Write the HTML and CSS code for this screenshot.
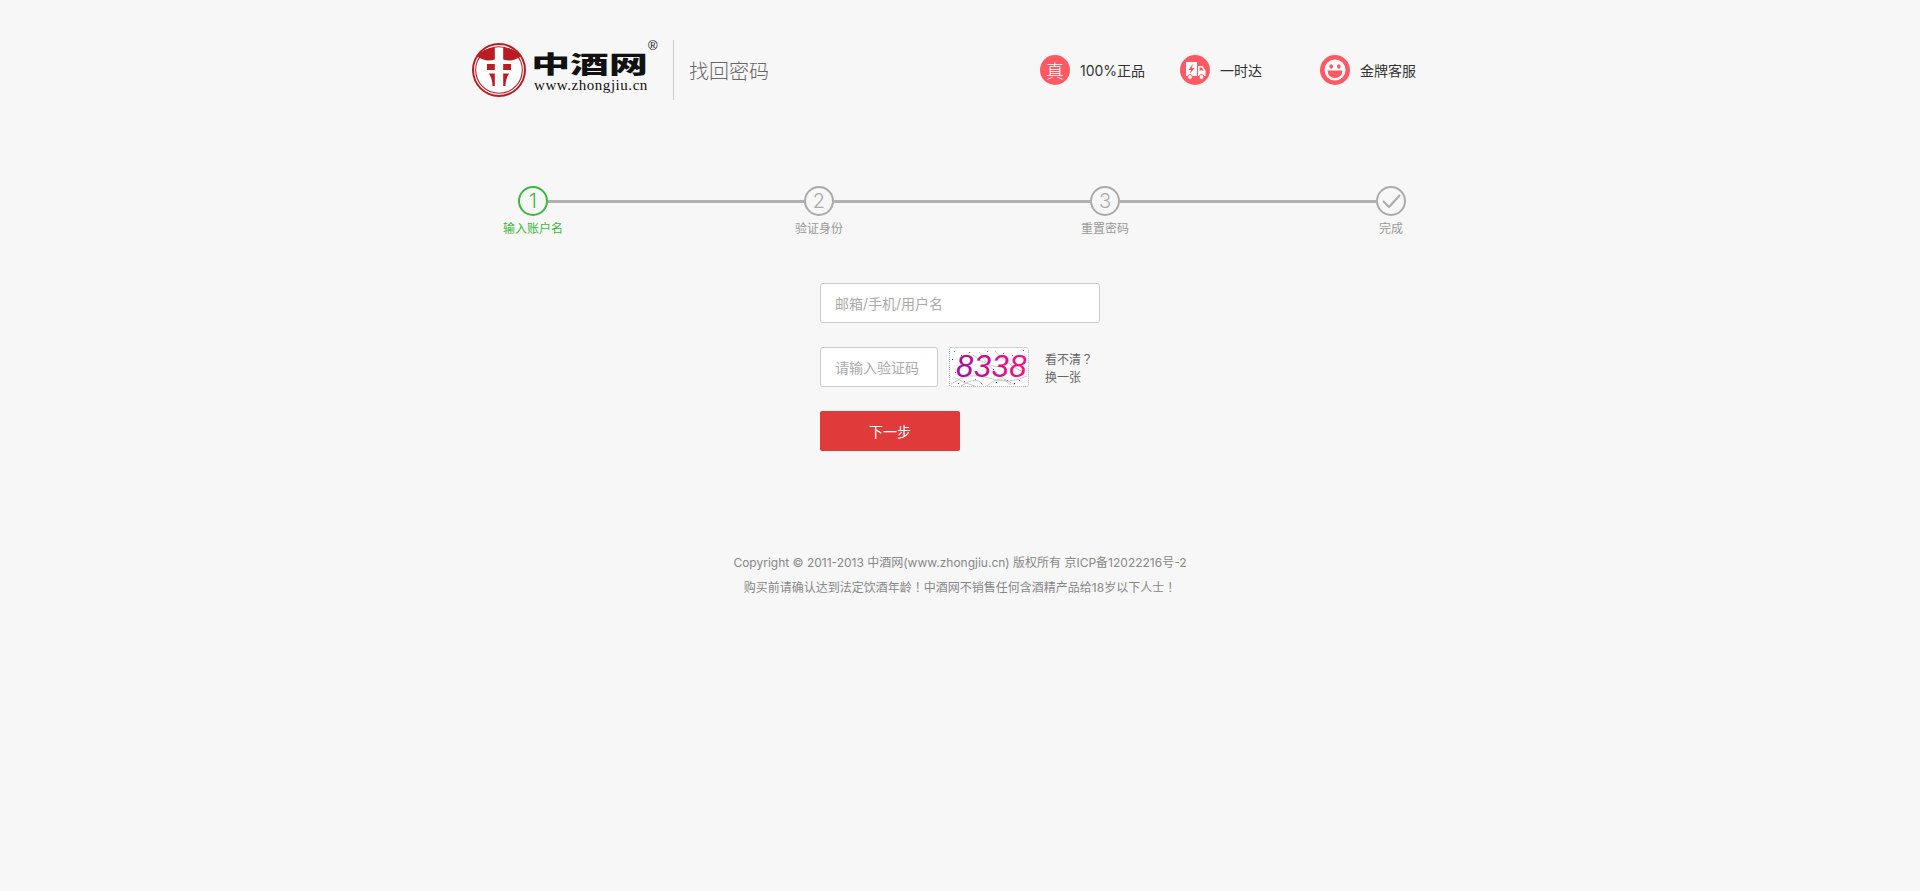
FILE: index.html
```html
<!DOCTYPE html>
<html lang="zh-CN">
<head>
  <meta charset="UTF-8">
  <title>找回密码</title>
  <link rel="stylesheet" href="styles.css">
</head>
<body>
<div class="wrap">
  <div class="header">
    <div class="logo">
      <svg class="logo-mark" width="54" height="56" viewBox="0 0 54 56">
        <circle cx="27" cy="28" r="27" fill="#b91c22"/>
        <circle cx="27" cy="28" r="24.4" fill="none" stroke="#fff" stroke-width="1.1"/>
        <circle cx="27" cy="28" r="22.8" fill="#fff"/>
        <path d="M5 14.5 Q12 18.5 16 18.5 Q20 18.5 22.8 17.5 L22.8 5.4 Q11 6 5 14.5 Z" fill="#b91c22"/>
        <path d="M49 14.5 Q42 18.5 38 18.5 Q34 18.5 31.2 17.5 L31.2 5.4 Q43 6 49 14.5 Z" fill="#b91c22"/>
        <path d="M15 22 L22.8 22 L22.8 28 L15 28 Z M31.2 22 L39 22 L39 28 L31.2 28 Z" fill="#b91c22"/>
        <path d="M17 31.5 L22.8 31.5 L22.8 44 L20.5 44 Q20.5 37 17 31.5 Z" fill="#b91c22"/>
        <path d="M37 31.5 L31.2 31.5 L31.2 44 L33.5 44 Q33.5 37 37 31.5 Z" fill="#b91c22"/>
      </svg>
      <div class="logo-text">
        <div class="logo-cn"><span class="logo-cn-text">中酒网</span><span class="logo-reg">®</span></div>
        <div class="logo-en">www.zhongjiu.cn</div>
      </div>
    </div>
    <div class="page-title">找回密码</div>
    <div class="features">
      <div class="feature">
        <span class="feature-icon feature-icon-text">真</span>
        <span>100%正品</span>
      </div>
      <div class="feature">
        <span class="feature-icon">
          <svg width="30" height="30" viewBox="0 0 30 30">
            <path d="M6 7 L17 7 L17 21 L6 21 Z" fill="#fff"/>
            <path d="M13 8.5 L8.5 15 L11 15 L9.5 19.5 L14.5 13 L11.8 13 Z" fill="#ff5a63"/>
            <path d="M18 11 L22.5 11 L25.5 15.5 L25.5 21 L18 21 Z" fill="#fff"/>
            <path d="M19.5 12.5 L22 12.5 L23.6 15.5 L19.5 15.5 Z" fill="#ff5a63"/>
            <circle cx="10" cy="22" r="2.4" fill="#fff" stroke="#ff5a63"/>
            <circle cx="21.5" cy="22" r="2.4" fill="#fff" stroke="#ff5a63"/>
          </svg>
        </span>
        <span>一时达</span>
      </div>
      <div class="feature">
        <span class="feature-icon">
          <svg width="30" height="30" viewBox="0 0 30 30">
            <circle cx="15" cy="15" r="10.5" fill="#fff"/>
            <ellipse cx="11.2" cy="11.5" rx="1.8" ry="2.2" fill="#ff5a63"/>
            <ellipse cx="18.8" cy="11.5" rx="1.8" ry="2.2" fill="#ff5a63"/>
            <path d="M7.5 15.5 L22.5 15.5 Q22 23 15 23 Q8 23 7.5 15.5 Z" fill="#ff5a63"/>
          </svg>
        </span>
        <span>金牌客服</span>
      </div>
    </div>
  </div>

  <div class="steps">
    <div class="step-track">
      <span class="step-dot step-dot-on">1</span>
      <span class="step-line"></span>
      <span class="step-dot">2</span>
      <span class="step-line"></span>
      <span class="step-dot">3</span>
      <span class="step-line"></span>
      <span class="step-dot">
        <svg width="20" height="16" viewBox="0 0 20 16">
          <path d="M2 8 L8 14 L19 2" fill="none" stroke="#aaa" stroke-width="2"/>
        </svg>
      </span>
    </div>
    <div class="step-labels">
      <span class="step-on">输入账户名</span>
      <span>验证身份</span>
      <span>重置密码</span>
      <span>完成</span>
    </div>
  </div>

  <form class="form">
    <input class="field" type="text" placeholder="邮箱/手机/用户名">
    <div class="code-row">
      <input class="field field-code" type="text" placeholder="请输入验证码">
      <svg class="captcha" width="80" height="40" viewBox="0 0 80 40">
        <defs>
          <linearGradient id="codeInk" x1="0" y1="0" x2="1" y2="0">
            <stop offset="0" stop-color="#a0109c"/>
            <stop offset="1" stop-color="#ff0f7e"/>
          </linearGradient>
        </defs>
        <rect x="0.5" y="0.5" width="79" height="39" rx="2" fill="#fff" stroke="#aaa" stroke-dasharray="1 1"/>
        <path d="M2 37 Q20 24 40 31 T78 29 M12 39 Q28 28 34 38 M38 39 Q50 26 62 38 M46 4 Q56 16 76 26 M24 8 Q38 20 52 20 M30 5 Q44 28 66 38 M5 30 Q14 36 26 39" fill="none" stroke="#b4b4b4" stroke-width="0.7"/>
        <text class="captcha-text" x="7" y="30" fill="url(#codeInk)">8338</text>
        <g fill="#3a7">
          <rect x="5" y="4" width="1" height="1"/><rect x="54" y="6" width="1" height="1"/><rect x="26" y="32" width="1" height="1"/>
          <rect x="15" y="34" width="1" height="1" fill="#e33"/><rect x="3" y="12" width="1" height="1" fill="#22c"/>
          <rect x="74" y="3" width="1" height="1" fill="#e33"/><rect x="76" y="14" width="1" height="1" fill="#0aa"/>
          <rect x="65" y="36" width="1" height="1" fill="#22c"/><rect x="47" y="35" width="1" height="1" fill="#22c"/>
          <rect x="38" y="4" width="1" height="1"/><rect x="6" y="25" width="1" height="1" fill="#e33"/>
          <rect x="58" y="33" width="1" height="1"/><rect x="70" y="33" width="1" height="1" fill="#e33"/>
          <rect x="20" y="5" width="1" height="1" fill="#c3c"/><rect x="44" y="22" width="1" height="1" fill="#22c"/>
          <rect x="9" y="36" width="1" height="1" fill="#22c"/><rect x="32" y="36" width="1" height="1"/>
          <rect x="63" y="8" width="1" height="1" fill="#c3c"/><rect x="12" y="8" width="1" height="1" fill="#e33"/>
        </g>
      </svg>
      <div class="code-refresh">看不清<span class="punct" lang="zh-TW">？</span><br>换一张</div>
    </div>
    <button class="next-btn" type="button">下一步</button>
  </form>

  <div class="footer">
    <p>Copyright © 2011-2013 中酒网(www.zhongjiu.cn) 版权所有 京ICP备12022216号-2</p>
    <p>购买前请确认达到法定饮酒年龄<span class="punct" lang="zh-TW">！</span>中酒网不销售任何含酒精产品给18岁以下人士<span class="punct" lang="zh-TW">！</span></p>
  </div>
</div>
</body>
</html>
```

FILE: styles.css
```css
* {
  box-sizing: border-box;
}

body {
  margin: 0;
  background-color: #f7f7f7;
  color: #333;
  font-family: Inter, "Noto Sans CJK SC", sans-serif;
  font-size: 12px;
}

.punct {
  font-family: "Noto Sans CJK TC", sans-serif;
}

.wrap {
  width: 1000px;
  margin: 0 auto;
  padding-top: 40px;
}

/* header */
.header {
  display: flex;
  align-items: center;
  height: 60px;
}

.logo {
  display: flex;
  align-items: center;
  width: 214px;
  height: 60px;
  padding-left: 12px;
  border-right: 1px solid #ccc;
}

.logo-mark {
  flex: none;
}

.logo-text {
  margin: 3px 0 0 8px;
}

.logo-cn {
  position: relative;
  width: 112px;
  height: 26px;
  color: #111;
  font-size: 37px;
  font-weight: 900;
  line-height: 26px;
  white-space: nowrap;
}

.logo-cn-text {
  display: inline-block;
  transform: scale(1.05, 0.66);
}

.logo-reg {
  position: absolute;
  top: -12px;
  left: 114px;
  font-family: "Liberation Sans", sans-serif;
  font-size: 13px;
  font-weight: 400;
  line-height: 14px;
}

.logo-en {
  margin-top: 1px;
  color: #111;
  font-family: "Liberation Serif", serif;
  font-size: 15px;
  font-weight: 400;
  line-height: 15px;
  letter-spacing: 0.55px;
  white-space: nowrap;
}

.page-title {
  margin-left: 15px;
  color: #666;
  font-size: 20px;
  font-weight: 300;
}

.features {
  display: flex;
  margin-left: auto;
}

.feature {
  display: flex;
  align-items: center;
  gap: 10px;
  width: 140px;
  font-size: 14px;
}

.feature-icon {
  display: flex;
  align-items: center;
  justify-content: center;
  width: 30px;
  height: 30px;
  border-radius: 50%;
  background-color: #ff5a63;
  color: #fff;
}

.feature-icon-text {
  font-size: 18px;
  font-weight: 300;
}

/* steps */
.steps {
  margin: 86px 54px 0 43px;
}

.step-track {
  display: flex;
  align-items: center;
  padding-left: 15px;
}

.step-dot {
  display: flex;
  flex: none;
  align-items: center;
  justify-content: center;
  width: 30px;
  height: 30px;
  border: 2px solid #aaa;
  border-radius: 50%;
  color: #aaa;
  font-size: 20px;
  font-weight: 300;
}

.step-dot-on {
  border-color: #3cb83c;
  color: #3cb83c;
}

.step-line {
  flex: 1;
  height: 3px;
  background-color: #b0b0b0;
}

.step-labels {
  display: flex;
  justify-content: space-between;
  margin-top: 4px;
  margin-right: -15px;
  color: #999;
  line-height: 18px;
}

.step-labels span {
  width: 60px;
  text-align: center;
}

.step-labels .step-on {
  color: #3cb83c;
}

/* form */
.form {
  margin: 45px 0 0 360px;
}

.field {
  display: block;
  width: 280px;
  height: 40px;
  padding: 0 14px;
  border: 1px solid #ccc;
  border-radius: 3px;
  background-color: #fff;
  font-family: inherit;
  font-size: 14px;
}

.field::placeholder {
  color: #aaa;
}

.field-code {
  width: 118px;
}

.code-row {
  display: flex;
  align-items: flex-start;
  margin-top: 24px;
}

.captcha {
  margin-left: 11px;
}

.captcha-text {
  font-family: "Liberation Sans", sans-serif;
  font-size: 31px;
  font-style: italic;
  letter-spacing: 0.5px;
}

.code-refresh {
  margin: 3px 0 0 16px;
  color: #666;
  line-height: 18px;
}

.next-btn {
  display: block;
  width: 140px;
  height: 40px;
  margin-top: 24px;
  border: none;
  border-radius: 2px;
  background-color: #e03a3a;
  color: #fff;
  font-family: inherit;
  font-size: 14px;
}

/* footer */
.footer {
  margin-top: 100px;
  color: #888;
  line-height: 24px;
  text-align: center;
}

.footer p {
  margin: 0;
}
```
